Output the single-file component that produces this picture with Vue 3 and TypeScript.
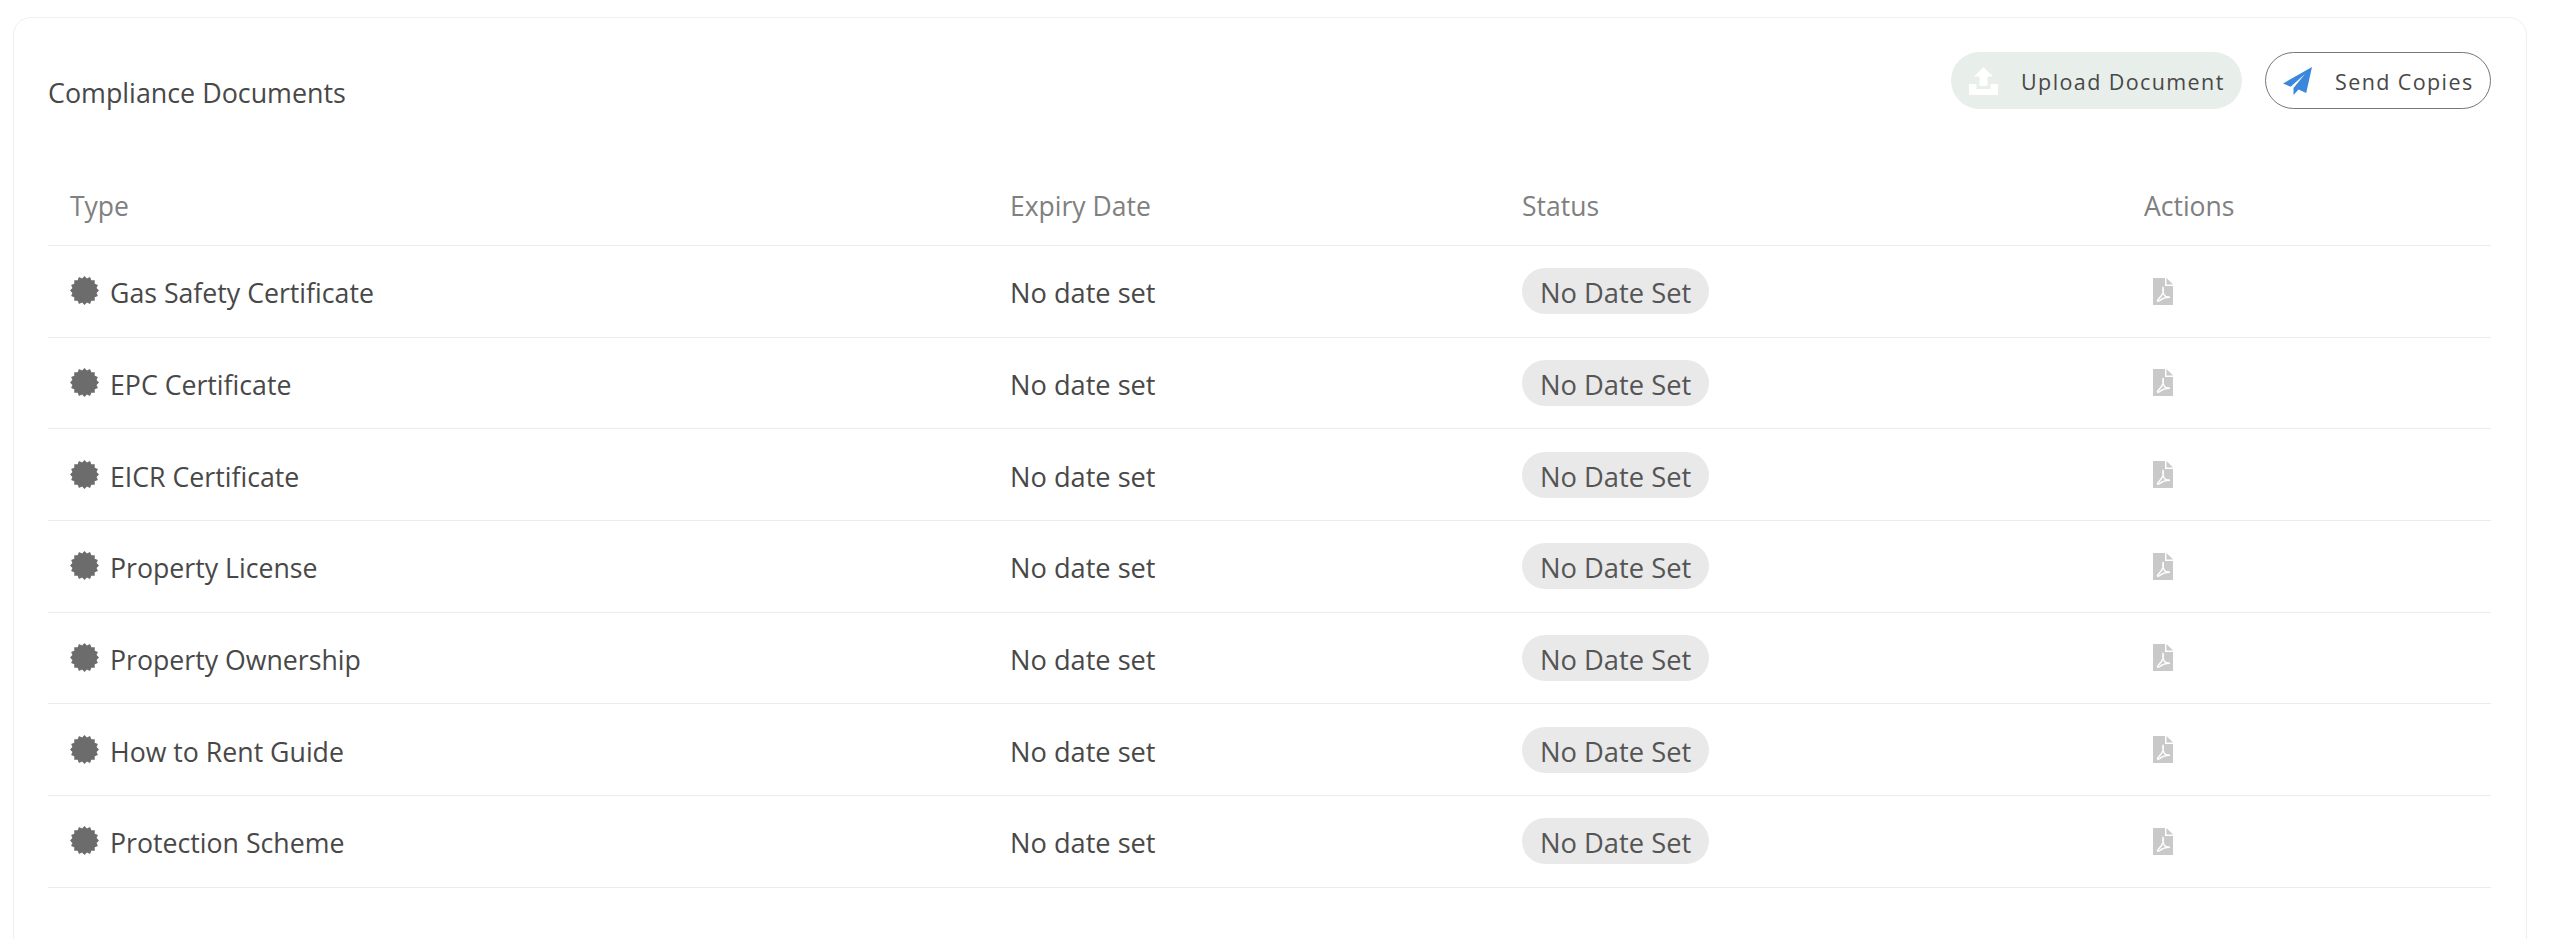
<script setup lang="ts">
const rows: string[] = [
  'Gas Safety Certificate',
  'EPC Certificate',
  'EICR Certificate',
  'Property License',
  'Property Ownership',
  'How to Rent Guide',
  'Protection Scheme',
]

const badge: string = Array.from({ length: 32 }, (_, i) => {
  const r = i % 2 === 0 ? 14.5 : 12.3
  const a = (i / 32) * Math.PI * 2
  return `${(14.5 + r * Math.sin(a)).toFixed(2)},${(14.5 - r * Math.cos(a)).toFixed(2)}`
}).join(' ')
</script>

<template>
  <div class="page">
    <section class="card">
      <header class="head">
        <h2 class="title">Compliance Documents</h2>
        <div class="buttons">
          <button class="btn upload" type="button">
            <svg class="btn-icon" viewBox="0 0 29 28" width="29" height="28" fill="#fff">
              <path d="M14.5 0 24 9.5h-5.5V19h-8V9.5H5z" />
              <path d="M0 17h7.5v5h14v-5H29v11H0z" />
            </svg>
            <span>Upload Document</span>
          </button>
          <button class="btn send" type="button">
            <svg class="btn-icon" viewBox="0 0 29 28" width="29" height="28" fill="#3a87dc">
              <path d="M29 0 0 16.5l7.6 3.200L22 7 10.500 21v7l5-5.400 7.700 3.400z" />
            </svg>
            <span>Send Copies</span>
          </button>
        </div>
      </header>

      <div class="table">
        <div class="tr th">
          <div>Type</div>
          <div>Expiry Date</div>
          <div>Status</div>
          <div>Actions</div>
        </div>
        <div v-for="row in rows" :key="row" class="tr td">
          <div class="type">
            <svg class="badge" viewBox="0 0 29 29" width="29" height="29">
              <polygon :points="badge" fill="#6c6c6c" />
            </svg>
            <span>{{ row }}</span>
          </div>
          <div class="date">No date set</div>
          <div class="status"><span class="pill">No Date Set</span></div>
          <div class="action">
            <svg viewBox="0 0 20 27" width="20" height="27">
              <path fill="#c9c9c9" d="M0 0h12v8h8v19H0z" />
              <path fill="#c9c9c9" d="M13.5 0 20 6.5h-6.5z" />
              <path fill="none" stroke="#fff" stroke-width="1.4" d="M10 9c-.6 3 .2 6 .9 7.5 1 2 2.8 3 6 2.8-3.2 0-7.500 1-10.500 3.500-1.500 1.200-2.500.2-1.500-1 1.500-1.800 4-4 5-7 .5-1.800.5-3.800.1-5.800z" />
            </svg>
          </div>
        </div>
      </div>
    </section>
  </div>
</template>

<style scoped>
.page {
  height: 939px;
  overflow: hidden;
  box-sizing: border-box;
  padding: 17px 33px 0 13px;
  background: #fff;
  font-family: "Open Sans", "Noto Sans", sans-serif;
  color: #444;
}
.card {
  box-sizing: border-box;
  height: 1000px;
  padding: 34px 35px 0 34px;
  border: 1px solid #efefef;
  border-radius: 18px;
  background: #fff;
}
.head {
  display: flex;
  justify-content: space-between;
  align-items: flex-start;
  height: 118px;
}
.title {
  margin: 23px 0 0;
  font-size: 26.85px;
  font-weight: 400;
  line-height: 36px;
  color: #484848;
}
.buttons {
  display: flex;
  gap: 23px;
}
.btn {
  display: flex;
  align-items: center;
  gap: 23px;
  box-sizing: border-box;
  height: 57px;
  border-radius: 28.5px;
  font-family: inherit;
  font-size: 21.5px;
  line-height: 32px;
  letter-spacing: 1.4px;
  color: #484848;
}
.btn span {
  padding-top: 3px;
}
.upload {
  width: 291px;
  padding: 0 0 0 18px;
  border: 0;
  background: #e8eeea;
}
.send {
  width: 226px;
  padding: 0 0 0 17px;
  border: 1px solid #777;
  background: #fff;
}
.btn-icon {
  flex: none;
}
.tr {
  display: grid;
  grid-template-columns: 940px 512px 622px 1fr;
  align-items: center;
  padding-left: 22px;
  border-bottom: 1px solid #ececec;
  box-sizing: border-box;
}
.th {
  height: 76px;
  padding-bottom: 3px;
  font-size: 26.5px;
  color: #808080;
}
.td {
  height: 91.67px;
  font-size: 26.7px;
  color: #484848;
}
.type span,
.date {
  padding-top: 3px;
}
.date {
  font-size: 27.2px;
}
.type {
  display: flex;
  align-items: center;
  gap: 11px;
}
.badge {
  flex: none;
  margin-top: -1px;
}
.status {
  display: flex;
  align-items: center;
}
.pill {
  box-sizing: border-box;
  height: 46px;
  padding: 2px 18px 0;
  border-radius: 23px;
  background: #e9e9e9;
  color: #555;
  font-size: 27.3px;
  line-height: 46px;
}
.action {
  display: flex;
  padding-left: 9px;
}
</style>
